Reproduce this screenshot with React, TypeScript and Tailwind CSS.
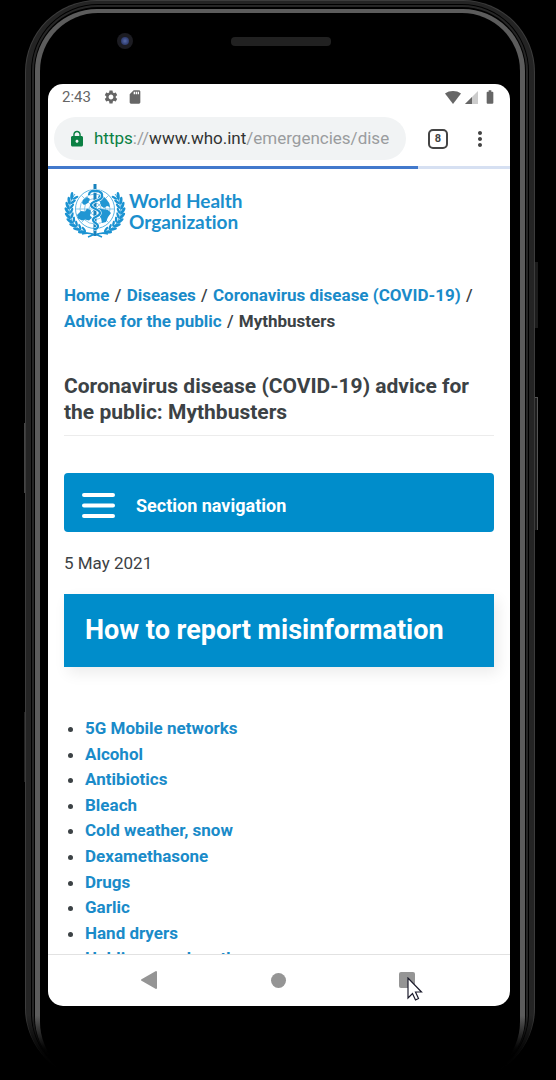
import React from "react";
import { MdSettings, MdSdCard, MdLock, MdBatteryFull, MdMoreVert } from "react-icons/md";

const topics = [
  "5G Mobile networks",
  "Alcohol",
  "Antibiotics",
  "Bleach",
  "Cold weather, snow",
  "Dexamethasone",
  "Drugs",
  "Garlic",
  "Hand dryers",
  "Holding your breath",
];

const linkClass = "font-bold text-[#1a8bc9]";
const slashClass = "mx-px font-medium";

function Laurel() {
  const angles = [0, 1, 2, 3, 4, 5, 6, 7, 8];
  return (
    <g>
      {angles.map((i) => {
        const deg = 118 + i * 12;
        const a = (deg * Math.PI) / 180;
        const ox = 31 + 28 * Math.cos(a);
        const oy = 27 + 25 * Math.sin(a);
        const ix = 31 + 23.5 * Math.cos(a);
        const iy = 27 + 22 * Math.sin(a);
        return (
          <g key={i} fill="#1b93d2">
            <ellipse cx={ox} cy={oy} rx="4" ry="1.5" transform={`rotate(${deg + 62} ${ox} ${oy})`} />
            <ellipse cx={ix} cy={iy} rx="3.2" ry="1.2" transform={`rotate(${deg + 118} ${ix} ${iy})`} />
          </g>
        );
      })}
      <path d="M29 51 C18 50 7 43 5.500 30 C5 23 7 16 11 11" fill="none" stroke="#1b93d2" strokeWidth=".8" />
    </g>
  );
}

function Emblem() {
  return (
    <svg viewBox="0 0 62 56" className="h-14 w-[62px] shrink-0" aria-hidden="true">
      <g fill="none" stroke="#7fc3e8" strokeWidth=".9">
        <circle cx="31" cy="26" r="19.500" stroke="#4bacdf" />
        <circle cx="31" cy="26" r="15" />
        <circle cx="31" cy="26" r="10.500" />
        <circle cx="31" cy="26" r="6" />
        <path d="M11.500 26h39M17.200 12.200l27.600 27.600M44.800 12.200L17.200 39.800" />
      </g>
      <g fill="#2196d3">
        <path d="M13 32l4-4 4 .5 2-3 4 2-1 5 2 2-3 3-4-1-3 1-4-2z" />
        <path d="M35 12l4 1 3 3 3 4 1 4-3-1-3 2-3-2-1-4-3-2z" />
        <path d="M34 25l4 1 6 1 3 3-3 4-2 5-4 1-1-5-3-4z" />
        <path d="M19 17l4-3 3 2-2 4-4 2-2-2z" />
      </g>
      <Laurel />
      <g transform="translate(62 0) scale(-1 1)">
        <Laurel />
      </g>
      <path d="M18 51c7-2 10 0 13 1 3-1 6-3 13-1M24 54l7-3 7 3" fill="none" stroke="#1b93d2" strokeWidth="1.500" />
      <path d="M29.500 1h3v52h-3z" fill="#1782bd" />
      <path
        d="M25 12c0-3 3-5 7-4 5 0 7 3 6 6-1 4-11 4-11 8s9 4 9 8-7 3-7 7c0 3 5 3 5 6 0 2-2 3-4 3"
        fill="none"
        stroke="white"
        strokeWidth="3.400"
      />
      <path
        d="M25 12c0-3 3-5 7-4 5 0 7 3 6 6-1 4-11 4-11 8s9 4 9 8-7 3-7 7c0 3 5 3 5 6 0 2-2 3-4 3"
        fill="none"
        stroke="#1b93d2"
        strokeWidth="2.300"
      />
    </svg>
  );
}

function StatusBar() {
  return (
    <div className="flex h-[26px] items-center pl-[14px] pr-3 text-[#666]">
      <span className="text-[15px] leading-6">2:43</span>
      <MdSettings className="ml-3 size-4" />
      <MdSdCard className="ml-2 size-4" />
      <svg viewBox="0 0 16 13" className="ml-auto h-[13px] w-4" aria-hidden="true">
        <path d="M8 13L0 2.500C4.500-.8 11.500-.8 16 2.500z" fill="currentColor" />
      </svg>
      <svg viewBox="0 0 13 13" className="ml-1 size-[13px]" aria-hidden="true">
        <path d="M13 0v13H0z" fill="#ccc" />
        <path d="M7 6v7H0z" fill="currentColor" />
      </svg>
      <MdBatteryFull className="ml-1 size-4" />
    </div>
  );
}

function BrowserBar() {
  return (
    <div className="flex items-center pb-[6px] pl-[6px] pr-[18px] pt-[7px]">
      <button
        type="button"
        aria-label="Address bar"
        className="flex h-[43px] min-w-0 flex-1 items-center rounded-full bg-[#f1f3f4] pl-[14px] pr-[10px] text-[17px]"
      >
        <MdLock className="mr-2 size-[18px] shrink-0 text-[#0b8043]" />
        <span className="whitespace-nowrap text-[#9a9c9e]">
          <span className="text-[#0b8043]">https</span>://<span className="text-[#333]">www.who.int</span>/emergencies/dise
        </span>
      </button>
      <button
        type="button"
        aria-label="Open tabs"
        className="ml-[22px] flex size-5 items-center justify-center rounded-[5px] border-2 border-[#444] text-[11px] font-bold leading-4 text-[#444]"
      >
        8
      </button>
      <button type="button" aria-label="Menu" className="ml-5 text-[#444]">
        <MdMoreVert className="size-6" />
      </button>
    </div>
  );
}

function Page() {
  return (
    <main className="min-h-0 flex-1 overflow-hidden px-4 pt-[14px] text-[17px] leading-[26px] text-[#3c4245]">
      <a href="#home" className="flex items-center gap-[3px] text-[#1b8fcd]">
        <Emblem />
        <span className="font-['Lato',sans-serif] text-[19px] font-bold leading-[21px] [font-variant-ligatures:none]">
          World Health
          <br />
          Organization
        </span>
      </a>
      <nav aria-label="Breadcrumb" className="mt-[43px] font-bold">
        <a href="#home" className={linkClass}>Home</a> <span className={slashClass}>/</span>{" "}
        <a href="#diseases" className={linkClass}>Diseases</a> <span className={slashClass}>/</span>{" "}
        <a href="#covid" className={linkClass}>Coronavirus disease (COVID-19)</a> <span className={slashClass}>/</span>{" "}
        <a href="#advice" className={linkClass}>Advice for the public</a> <span className={slashClass}>/</span>{" "}
        <span>Mythbusters</span>
      </nav>
      <h1 className="mt-[39px] border-b border-[#ececec] pb-[10px] text-[21px] font-bold leading-[26px]">
        Coronavirus disease (COVID-19) advice for the public: Mythbusters
      </h1>
      <button
        type="button"
        className="mt-[37px] flex h-[59px] w-full items-center gap-5 rounded-[4px] bg-[#008dcb] pl-[18px] pt-[6px] text-[18px] font-bold text-white"
      >
        <svg viewBox="0 0 34 26" className="h-[26px] w-[34px]" aria-hidden="true">
          <path d="M2 2h29M2 12.500h29M2 23h29" stroke="white" strokeWidth="4" strokeLinecap="round" />
        </svg>
        Section navigation
      </button>
      <p className="mt-[18px]">5 May 2021</p>
      <a
        href="#report"
        className="mt-[18px] flex h-[73px] items-center bg-[#008dcb] px-[21px] pb-px text-[27px] font-bold text-white shadow-[4px_6px_14px_rgba(0,0,0,0.08)]"
      >
        How to report misinformation
      </a>
      <ul className="mt-[49px] grid h-[256px] list-disc auto-rows-fr pl-[21px] leading-[25px]">
        {topics.map((t) => (
          <li key={t}>
            <a href="#topic" className={linkClass}>{t}</a>
          </li>
        ))}
      </ul>
    </main>
  );
}

function SystemNav() {
  return (
    <div className="flex h-[52px] shrink-0 items-center justify-between border-t border-[#e2e2e2] px-[92px] pb-px">
      <button type="button" aria-label="Back">
        <svg viewBox="0 0 18 20" className="h-5 w-[18px]">
          <path d="M16 2v16L2 10z" fill="#959595" stroke="#959595" strokeWidth="2" strokeLinejoin="round" />
        </svg>
      </button>
      <button type="button" aria-label="Home" className="size-[15px] rounded-full bg-[#959595]" />
      <button type="button" aria-label="Recent apps" className="relative mr-[3px] size-4 rounded-[2px] bg-[#959595]">
        <svg viewBox="0 0 16 24" className="absolute left-2 top-[5px] h-6 w-4" aria-hidden="true">
          <path d="M1 1v20l4.500-4.500 3 6.500 3-1.500-3-6.500h6z" fill="white" stroke="#1c1c2c" strokeWidth="1.200" />
        </svg>
      </button>
    </div>
  );
}

export default function App() {
  return (
    <div className="relative h-screen bg-black pl-[25px] pr-[21px] font-[Roboto,sans-serif]">
      <div className="absolute left-6 top-[423px] h-[70px] w-px bg-[#444]" />
      <div className="absolute left-6 top-[712px] h-[70px] w-px bg-[#222]" />
      <div className="absolute right-[18px] top-[262px] h-[66px] w-[3px] bg-[#1c1c1c]" />
      <div className="absolute right-[18px] top-[397px] h-[133px] w-[3px] border-r border-t border-[#555] bg-[#1c1c1c]" />
      <div className="relative h-full rounded-[72px] bg-linear-to-b from-[#3c3c3c] from-94% to-black to-100% px-px pt-px">
        <div className="h-full rounded-[71px] bg-linear-to-b from-[#242424] from-94% to-black to-100% px-[5px] pt-[3px]">
          <div className="h-full rounded-[67px] bg-black px-px pt-px">
            <div className="h-full rounded-[66px] bg-linear-to-b from-[#262626] from-94% to-black to-99% px-[2px] pt-[2px]">
              <div className="h-full rounded-[64px] bg-black px-px pt-[2px]">
                <div className="h-full rounded-[62px] bg-linear-to-b from-[#5c5c5c] from-94% to-black to-98% px-[5px] pt-[4px]">
                  <div className="flex h-full flex-col rounded-[58px] bg-black pl-2 pr-[10px]">
                    <div className="relative flex h-[71px] shrink-0 items-start justify-center pt-6">
                      <div className="absolute left-[69px] top-5 flex size-4 items-center justify-center rounded-full bg-[#1c1c22]">
                        <div className="size-2 rounded-full bg-[radial-gradient(#5569a8,#1c2550)]" />
                      </div>
                      <div className="ml-1 h-[9px] w-[100px] rounded-[4px] bg-[#212121]" />
                    </div>
                    <div className="mb-[74px] flex min-h-0 flex-1 flex-col overflow-hidden rounded-[15px] bg-white">
                      <StatusBar />
                      <BrowserBar />
                      <div className="h-[3px] shrink-0 bg-[#d6e0f2]">
                        <div className="h-full w-4/5 bg-[#4279cc]" />
                      </div>
                      <Page />
                      <SystemNav />
                    </div>
                  </div>
                </div>
              </div>
            </div>
          </div>
        </div>
      </div>
    </div>
  );
}
